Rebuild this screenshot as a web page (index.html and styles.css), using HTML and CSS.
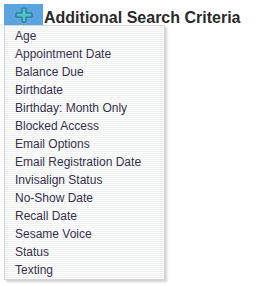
FILE: index.html
```html
<!DOCTYPE html>
<html lang="en">
<head>
    <meta charset="UTF-8">
    <title>Additional Search Criteria</title>
    <link rel="stylesheet" href="styles.css">
</head>
<body>
    <div class="criteria">
        <div class="criteria-header">
            <button class="add-btn" type="button">
                <svg width="18" height="16" viewBox="0 0 18 16">
                    <path d="M7 1h4v5h6v4h-6v5H7v-5H1V6h6z" fill="#4fc3d0" stroke="#1f6f7a" stroke-width="1"/>
                </svg>
            </button>
            <h2>Additional Search Criteria</h2>
        </div>
        <ul class="menu">
            <li>Age</li>
            <li>Appointment Date</li>
            <li>Balance Due</li>
            <li>Birthdate</li>
            <li>Birthday: Month Only</li>
            <li>Blocked Access</li>
            <li>Email Options</li>
            <li>Email Registration Date</li>
            <li>Invisalign Status</li>
            <li>No-Show Date</li>
            <li>Recall Date</li>
            <li>Sesame Voice</li>
            <li>Status</li>
            <li>Texting</li>
        </ul>
    </div>
</body>
</html>
```

FILE: styles.css
```css
* {
    margin: 0;
    padding: 0;
    box-sizing: border-box;
}

body {
    font-family: 'Liberation Sans', Arial, sans-serif;
    background: #ffffff;
    color: #333;
    padding: 4px;
}

.criteria-header {
    display: flex;
    align-items: center;
    height: 21px;
}

.add-btn {
    width: 39px;
    height: 21px;
    border: none;
    background: #5ba4e0;
    display: flex;
    align-items: center;
    justify-content: center;
}

.criteria-header h2 {
    font-size: 16px;
    font-weight: bold;
    color: #2a2a2a;
    margin-left: 1px;
    margin-top: 6px;
}

.menu {
    list-style: none;
    width: 161px;
    border: 1px solid #d4d4d4;
    padding-top: 1px;
    background: repeating-linear-gradient(to bottom, #ffffff 0, #ffffff 1px, #f0f2f2 1px, #f0f2f2 2px);
    box-shadow: 2px 2px 2px rgba(0,0,0,0.18);
}

.menu li {
    font-size: 12px;
    line-height: 18px;
    height: 18px;
    padding-left: 10px;
    color: #35304a;
}
```
